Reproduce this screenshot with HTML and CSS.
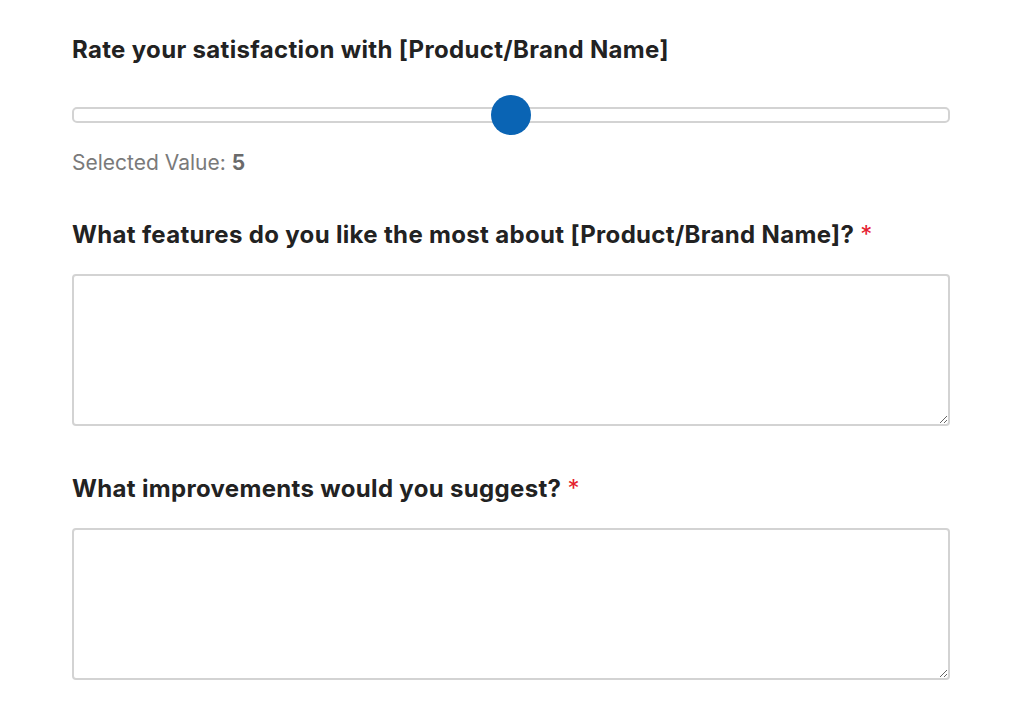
FILE: index.html
```html
<!DOCTYPE html>
<html lang="en">
<head>
<meta charset="utf-8">
<title>Feedback form</title>
<link rel="stylesheet" href="styles.css">
</head>
<body>
<form class="survey">
  <div class="field">
    <label class="question" for="rating">Rate your satisfaction with [Product/Brand Name]</label>
    <input class="slider" id="rating" type="range" min="0" max="10" value="5">
    <p class="selected">Selected Value: <b>5</b></p>
  </div>
  <div class="field">
    <label class="question" for="likes">What features do you like the most about [Product/Brand Name]? <span class="req">*</span></label>
    <textarea class="answer" id="likes"></textarea>
  </div>
  <div class="field">
    <label class="question" for="improve">What improvements would you suggest? <span class="req">*</span></label>
    <textarea class="answer" id="improve"></textarea>
  </div>
</form>
</body>
</html>
```
FILE: styles.css
```css
html, body {
  margin: 0;
  padding: 0;
  background: #ffffff;
}
body {
  font-family: Inter, "Noto Sans", sans-serif;
  color: #222222;
}
.survey {
  width: 878px;
  margin: 0 0 0 72px;
  padding-top: 34px;
  display: flex;
  flex-direction: column;
}
.field {
  display: flex;
  flex-direction: column;
}
.question {
  font-size: 24px;
  font-weight: 700;
  line-height: 32px;
  letter-spacing: 0.33px;
  color: #222222;
}
.req {
  color: #e5202e;
  font-weight: 400;
}
.slider {
  -webkit-appearance: none;
  appearance: none;
  margin: 29px 0 0 0;
  width: 878px;
  height: 40px;
  background: transparent;
  padding: 0;
}
.slider::-webkit-slider-runnable-track {
  height: 16px;
  box-sizing: border-box;
  border: 2px solid #d3d3d3;
  border-radius: 5px;
  background: #ffffff;
}
.slider::-webkit-slider-thumb {
  -webkit-appearance: none;
  appearance: none;
  width: 40px;
  height: 40px;
  border-radius: 50%;
  background: #0a64b4;
  border: none;
  margin-top: -14px;
}
.selected {
  margin: 14px 0 0 0;
  font-size: 21px;
  line-height: 28px;
  color: #7a7a7a;
}
.selected b {
  font-weight: 700;
  color: #6a6a6a;
}
.field:nth-child(2) {
  margin-top: 42px;
}
.field:nth-child(3) {
  margin-top: 47px;
}
.answer {
  margin-top: 23px;
  width: 878px;
  height: 152px;
  box-sizing: border-box;
  border: 2px solid #d3d3d3;
  border-radius: 4px;
  background: #ffffff;
  font-family: inherit;
  font-size: 16px;
  resize: vertical;
}
```
